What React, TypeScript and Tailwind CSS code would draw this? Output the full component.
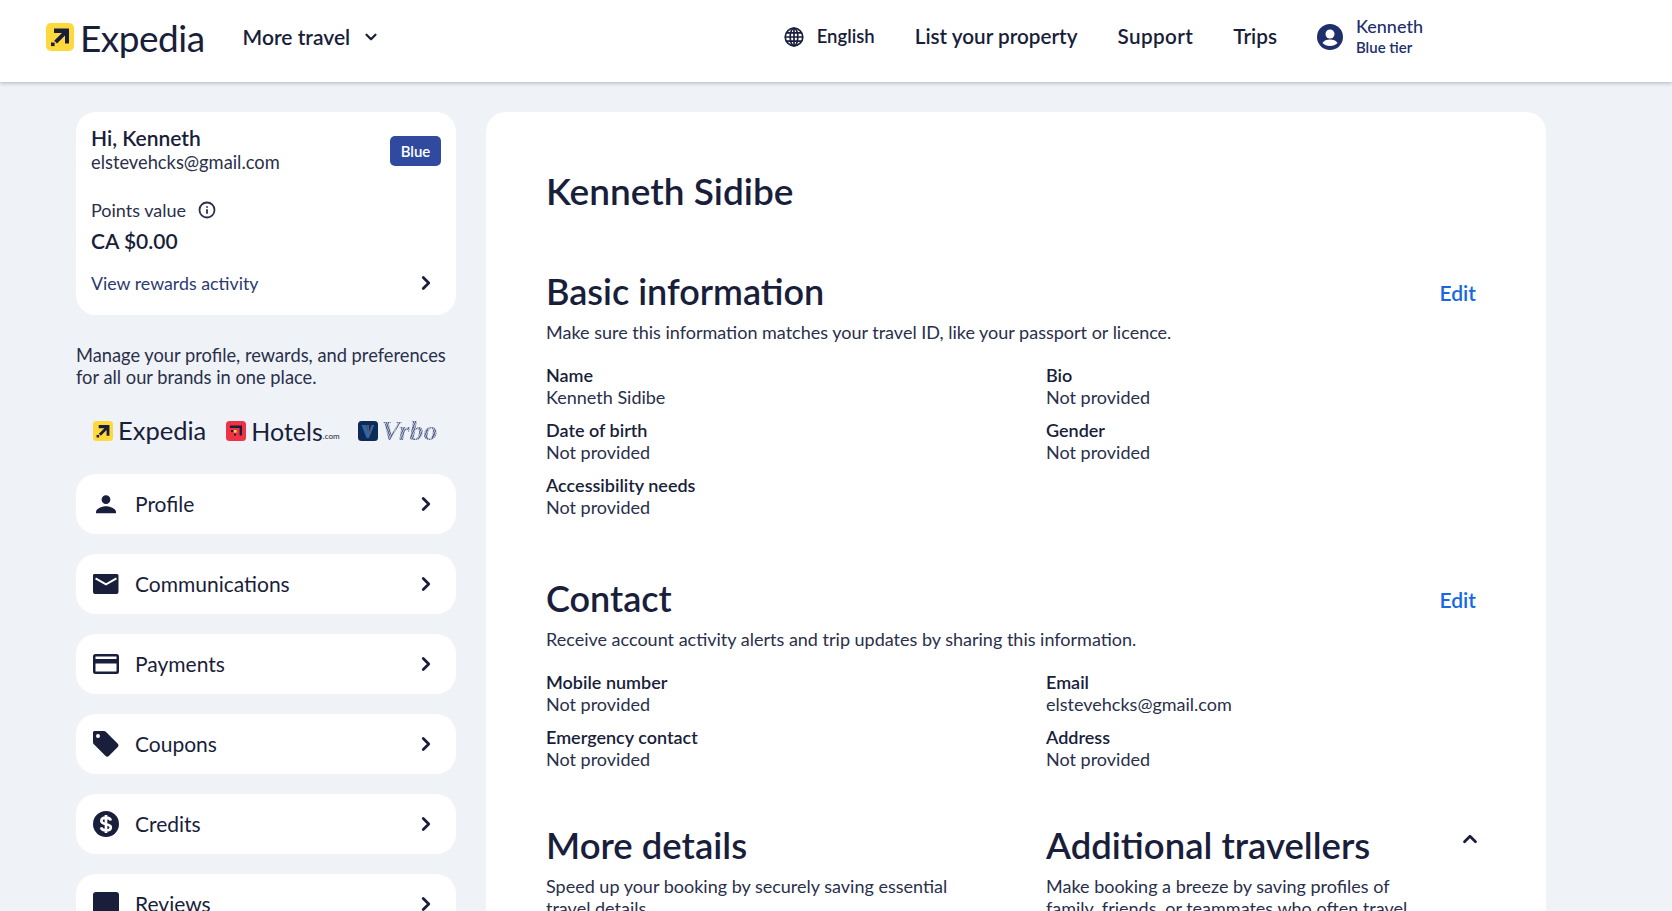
import { ChevronDown, ChevronRight, ChevronUp, Info } from "lucide-react";
import type { ReactNode } from "react";

const ink = "text-[#191e3b]";

function ExpediaMark({ className }: { className: string }) {
  return (
    <svg viewBox="0 0 28 28" className={className}>
      <rect width="28" height="28" rx="5" fill="#ffd93b" />
      <path d="M8 5.500h15v15h-4v-8l-8 8-2.800-2.800 7.800-7.700h-8z" fill="#191e3b" />
      <rect x="5" y="19.500" width="3.600" height="3.600" fill="#191e3b" />
    </svg>
  );
}

function HotelsMark() {
  return (
    <svg viewBox="0 0 20 20" className="h-5 w-5">
      <rect width="20" height="20" rx="3.500" fill="#ef3346" />
      <path d="M4 4.500h12v10h-2.400V7H4z" fill="#191e3b" />
      <rect x="5" y="9" width="2" height="2" fill="#191e3b" />
      <rect x="8" y="9" width="2.600" height="2.600" fill="#ffd93b" />
      <rect x="8" y="12.600" width="2" height="2" fill="#191e3b" />
    </svg>
  );
}

function VrboMark() {
  return (
    <svg viewBox="0 0 20 20" className="h-5 w-5">
      <rect width="20" height="20" rx="3.500" fill="#0e2a56" />
      <path d="M3.500 4h5l2 8 3-8h2.800L11 17H8.500z" fill="#2a66a8" />
      <path d="M9 4h2v9h-1z" fill="#8a4a4a" />
    </svg>
  );
}

function GlobeIcon() {
  return (
    <svg viewBox="0 0 20 20" className="h-5 w-5 fill-none stroke-current" strokeWidth="1.700">
      <circle cx="10" cy="10" r="8.800" />
      <ellipse cx="10" cy="10" rx="3.800" ry="8.800" />
      <path d="M10 1.200v17.600M1.200 10h17.600M2.400 5.800h15.200M2.400 14.200h15.200" />
    </svg>
  );
}

function ProfileIcon() {
  return (
    <svg viewBox="0 0 24 24" className="h-6 w-6 fill-current">
      <path d="M12 3.200a4.400 4.400 0 1 1 0 8.800a4.400 4.400 0 0 1 0-8.800zM2 20c0-3.800 6.700-5.800 10-5.800s10 2 10 5.800v1.200H2z" />
    </svg>
  );
}

function MailIcon() {
  return (
    <svg viewBox="0 0 26 20" className="h-5 w-[26px] fill-current">
      <path d="M2 0h22a1.500 1.500 0 0 1 1.500 1.500V18a2 2 0 0 1-2 2H2a2 2 0 0 1-2-2V1.500A1.500 1.500 0 0 1 2 0zM3 3.500l-.9 1.700L13 11.400l10.900-6.200-.9-1.700-10 5.700z" fillRule="evenodd" />
    </svg>
  );
}

function CardIcon() {
  return (
    <svg viewBox="0 0 26 20" className="h-5 w-[26px] fill-current">
      <path d="M2.500 0h21A2.500 2.500 0 0 1 26 2.500v15a2.500 2.500 0 0 1-2.500 2.500h-21A2.500 2.500 0 0 1 0 17.500v-15A2.500 2.500 0 0 1 2.500 0zM2.500 2.500v2.500h21V2.500zM2.500 9.500v8h21v-8z" fillRule="evenodd" />
    </svg>
  );
}

function TagIcon() {
  return (
    <svg viewBox="0 0 26 26" className="h-[26px] w-[26px] fill-current">
      <path d="M1.500 0H11c.7 0 1.300.3 1.800.8l12 12c.9.900.9 2.300 0 3.200l-9 9c-.9.900-2.300.9-3.200 0l-12-12C.2 12.500 0 11.900 0 11.200V1.500C0 .7.700 0 1.500 0zM5 3a2 2 0 1 0 0 4 2 2 0 0 0 0-4z" fillRule="evenodd" />
    </svg>
  );
}

function CreditIcon() {
  return (
    <svg viewBox="0 0 26 26" className="h-[26px] w-[26px]">
      <circle cx="13" cy="13" r="13" fill="currentColor" />
      <path d="M17.800 9.500C17.300 7.600 15.400 6.700 13 6.700c-2.700 0-4.600 1.300-4.600 3.300 0 4.500 9.400 2.100 9.400 6.200 0 2.100-2 3.200-4.800 3.200-2.700 0-4.500-1.100-5-3.100M13 4v18" fill="none" stroke="#fff" strokeWidth="2.700" />
    </svg>
  );
}

function ReviewIcon() {
  return <span className="block h-6 w-[26px] rounded-[3px] bg-current" />;
}

function NavCard({ icon, label }: { icon: ReactNode; label: string }) {
  return (
    <div className={`flex h-[60px] shrink-0 items-center rounded-[20px] bg-white pl-[17px] pr-[19px] ${ink}`}>
      <span className="flex w-[26px] justify-center">{icon}</span>
      <span className="ml-[16px] flex-1 text-[21px]">{label}</span>
      <ChevronRight className="h-[22px] w-[22px]" strokeWidth={3} />
    </div>
  );
}

function Field({ label, value }: { label: string; value?: string }) {
  return (
    <div className="h-[55px] text-[18px] leading-[22px]">
      <div className="font-semibold">{label}</div>
      <div className="text-[#2a2f4b]">{value ?? "Not provided"}</div>
    </div>
  );
}

function SectionHead({ title, text }: { title: string; text: string }) {
  return (
    <>
      <div className="flex items-center justify-between">
        <h2 className="text-[36px] font-semibold leading-[40px]">{title}</h2>
        <a className="mt-1 text-[21px] font-semibold text-[#1668e3]">Edit</a>
      </div>
      <p className="mt-[10px] text-[18px] leading-[22px] text-[#2a2f4b]">{text}</p>
    </>
  );
}

export default function App() {
  return (
    <div className={`h-[911px] overflow-hidden bg-[#eff3f7] font-['Lato',sans-serif] ${ink}`}>
      <header className="relative flex h-[82px] items-center bg-white pb-[8px] pl-[46px] pr-[249px] shadow-[0_1px_4px_rgba(25,30,59,0.3)]">
        <ExpediaMark className="h-7 w-7" />
        <span className="ml-[6px] text-[37px] leading-none tracking-[-0.5px]">Expedia</span>
        <div className="ml-[38px] flex items-center text-[21px] font-semibold">
          More travel
          <ChevronDown className="ml-[12px] h-[18px] w-[18px]" strokeWidth={3} />
        </div>
        <nav className="ml-auto flex items-center text-[20.7px] font-semibold">
          <GlobeIcon />
          <span className="ml-[13px] text-[18.5px]">English</span>
          <span className="ml-10">List your property</span>
          <span className="ml-10 tracking-[0.4px]">Support</span>
          <span className="ml-10">Trips</span>
          <svg viewBox="0 0 26 26" className="ml-10 h-[26px] w-[26px] text-[#1f2f6c]">
            <circle cx="13" cy="13" r="13" fill="currentColor" />
            <circle cx="13" cy="10" r="4.500" fill="#fff" />
            <path d="M5.500 19c1.200-2.500 4.500-3.500 7.500-3.500s6.300 1 7.500 3.500c-1.800 2-4.500 3-7.500 3s-5.700-1-7.500-3z" fill="#fff" />
          </svg>
          <div className="ml-[13px] pb-[2px] text-[#1f2f6c]">
            <div className="text-[18px] font-medium leading-[23px]">Kenneth</div>
            <div className="text-[15px] leading-[19px]">Blue tier</div>
          </div>
        </nav>
      </header>

      <div className="flex items-start gap-[30px] pl-[76px] pt-[30px]">
        <aside className="flex w-[380px] flex-col">
          <div className="h-[203px] rounded-[20px] bg-white pl-[15px] pr-[15px] pt-3">
            <div className="flex items-start justify-between">
              <div>
                <div className="text-[21px] font-semibold leading-[28px]">Hi, Kenneth</div>
                <div className="text-[18.3px] leading-[20px] text-[#2a2f4b]">elstevehcks@gmail.com</div>
              </div>
              <span className="mt-3 flex h-[30px] w-[51px] items-center justify-center rounded-[5px] bg-[#2f4a9e] text-[15px] font-semibold text-white">
                Blue
              </span>
            </div>
            <div className="mt-[28px] flex items-center text-[18px] leading-[20px] text-[#2a2f4b]">
              Points value
              <Info className="ml-3 h-[18px] w-[18px]" strokeWidth={2.4} />
            </div>
            <div className="mt-[9px] text-[21px] font-semibold leading-[24px]">CA $0.00</div>
            <div className="mt-[17px] flex items-center justify-between pr-[4px] text-[17.8px] text-[#2c3a6f]">
              View rewards activity
              <ChevronRight className={`h-[22px] w-[22px] ${ink}`} strokeWidth={3} />
            </div>
          </div>

          <p className="mt-[29px] text-[18.3px] leading-[22px] text-[#2a2f4b]">
            Manage your profile, rewards, and preferences for all our brands in one place.
          </p>

          <div className="mt-[32px] flex h-[22px] items-center pl-[17px]">
            <ExpediaMark className="h-5 w-5" />
            <span className="ml-[5px] text-[25.5px] leading-none">Expedia</span>
            <span className="ml-5"><HotelsMark /></span>
            <span className="ml-[5px] text-[25px] leading-none">Hotels</span>
            <span className="mt-[9px] text-[8px] leading-none">.com</span>
            <span className="ml-[18px]"><VrboMark /></span>
            <span className="ml-1 bg-[repeating-linear-gradient(115deg,#5f6b8e_0,#5f6b8e_1px,#aab2c8_1px,#aab2c8_2px)] bg-clip-text font-['Liberation_Serif',serif] text-[28px] font-bold italic leading-none text-transparent">Vrbo</span>
          </div>

          <div className="mt-[32px] flex flex-col gap-5">
            <NavCard icon={<ProfileIcon />} label="Profile" />
            <NavCard icon={<MailIcon />} label="Communications" />
            <NavCard icon={<CardIcon />} label="Payments" />
            <NavCard icon={<TagIcon />} label="Coupons" />
            <NavCard icon={<CreditIcon />} label="Credits" />
            <NavCard icon={<ReviewIcon />} label="Reviews" />
          </div>
        </aside>

        <main className="h-[900px] w-[1060px] rounded-[20px] bg-white pl-[60px] pr-[70px] pt-[57px]">
          <h1 className="text-[37px] font-semibold leading-[44px]">Kenneth Sidibe</h1>

          <section className="mt-[58px]">
            <SectionHead
              title="Basic information"
              text="Make sure this information matches your travel ID, like your passport or licence."
            />
            <div className="mt-[21px] grid grid-cols-[500px_1fr]">
              <Field label="Name" value="Kenneth Sidibe" />
              <Field label="Bio" />
              <Field label="Date of birth" />
              <Field label="Gender" />
              <Field label="Accessibility needs" />
            </div>
          </section>

          <section className="mt-[49px]">
            <SectionHead
              title="Contact"
              text="Receive account activity alerts and trip updates by sharing this information."
            />
            <div className="mt-[21px] grid grid-cols-[500px_1fr]">
              <Field label="Mobile number" />
              <Field label="Email" value="elstevehcks@gmail.com" />
              <Field label="Emergency contact" />
              <Field label="Address" />
            </div>
          </section>

          <section className="mt-[44px] grid grid-cols-[500px_1fr]">
            <div>
              <h2 className="text-[36.5px] font-semibold leading-[40px]">More details</h2>
              <p className="mt-[10px] w-[420px] text-[18px] leading-[22px] text-[#2a2f4b]">
                Speed up your booking by securely saving essential travel details.
              </p>
            </div>
            <div className="relative">
              <h2 className="text-[36.5px] font-semibold leading-[40px]">Additional travellers</h2>
              <ChevronUp className="absolute right-[-5px] top-[3px] h-[22px] w-[22px]" strokeWidth={3} />
              <p className="mt-[10px] w-[370px] text-[18px] leading-[22px] text-[#2a2f4b]">
                Make booking a breeze by saving profiles of family, friends, or teammates who often travel with you.
              </p>
            </div>
          </section>
        </main>
      </div>
    </div>
  );
}
